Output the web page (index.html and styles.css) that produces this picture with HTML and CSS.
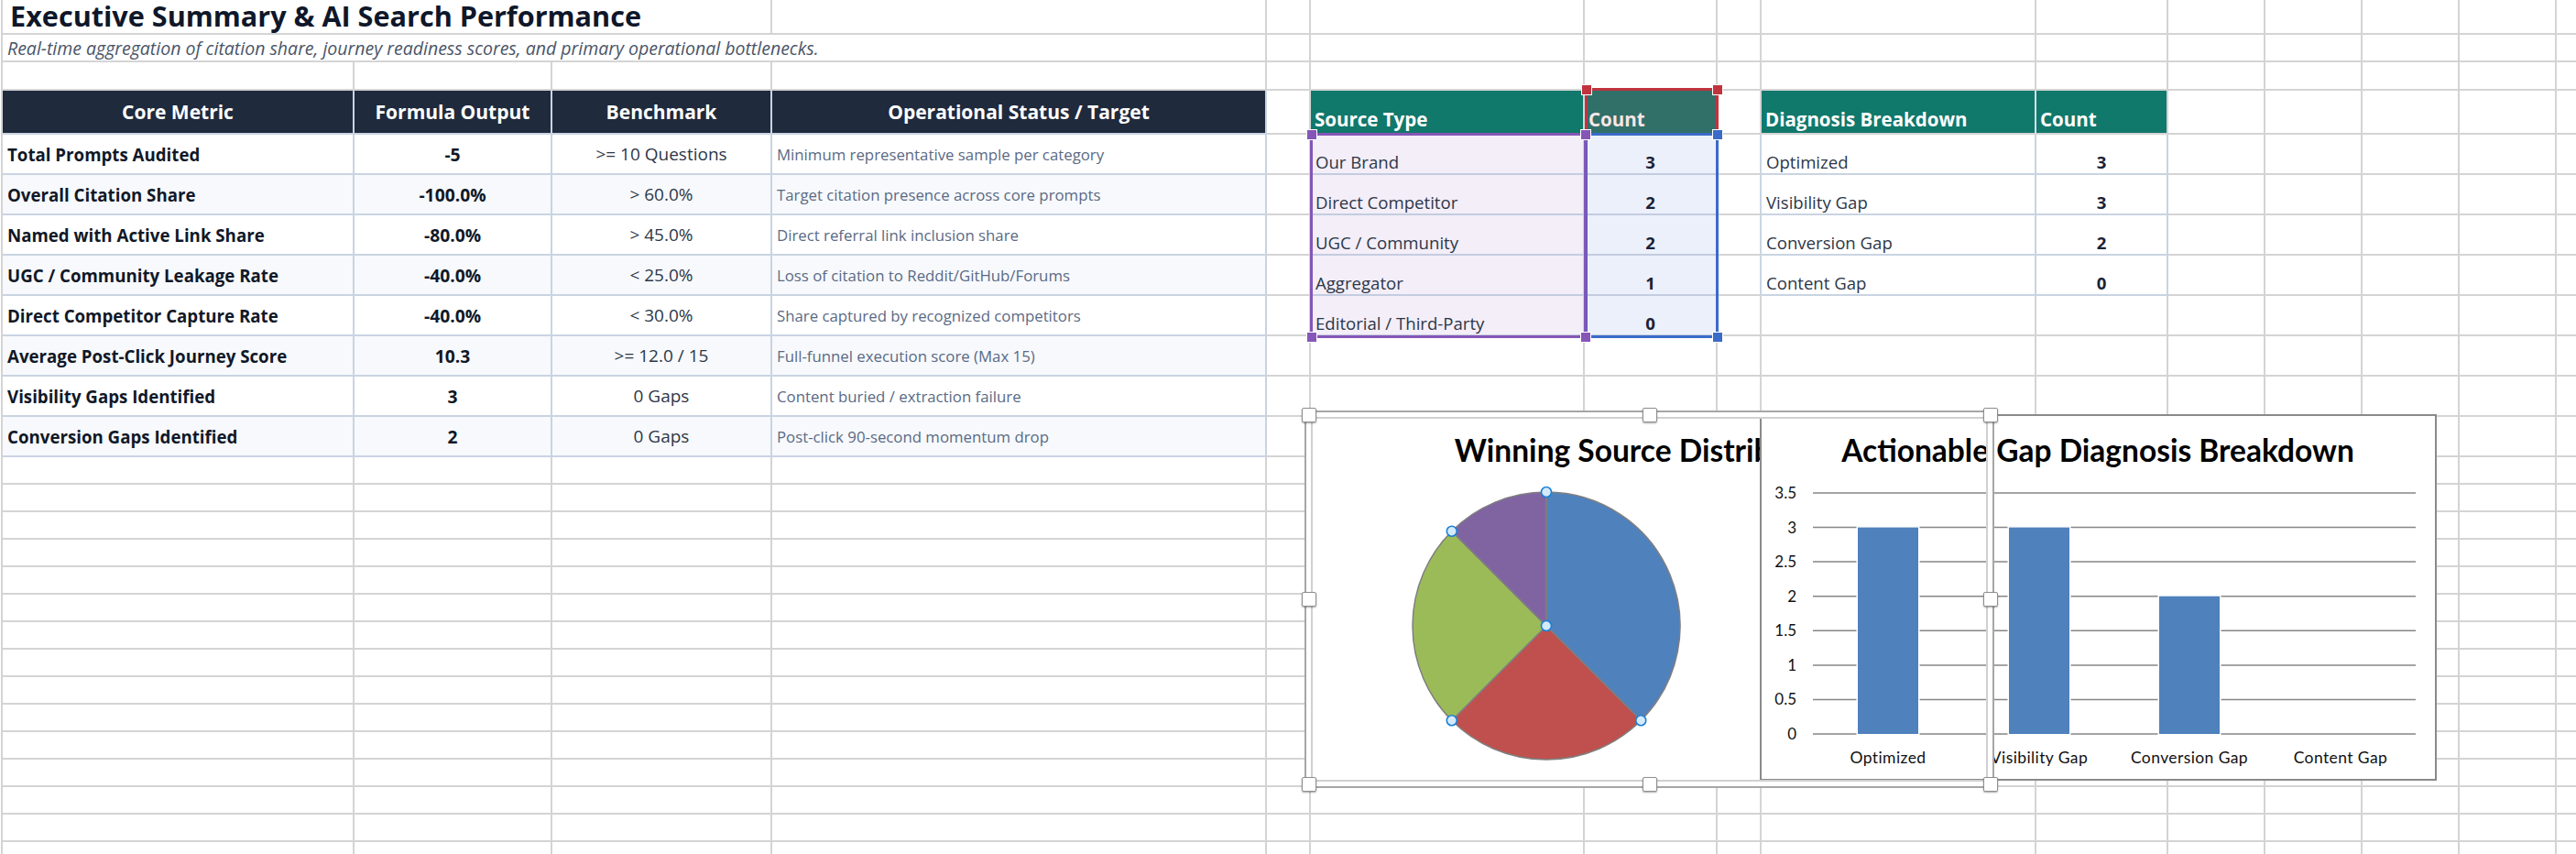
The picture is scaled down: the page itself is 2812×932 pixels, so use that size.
FILE: index.html
```html
<!DOCTYPE html>
<html lang="en">
<head>
<meta charset="utf-8">
<title>Executive Summary &amp; AI Search Performance</title>
<link rel="stylesheet" href="styles.css">
</head>
<body>
<div class="page">
  <div class="sheet">
    <div class="row r1">
      <div class="span3 title">Executive Summary &amp; AI Search Performance</div>
      <i></i><i></i><i></i><i></i><i></i><i></i><i></i><i></i><i></i><i></i><i></i><i></i>
    </div>
    <div class="row r2">
      <div class="span4 subtitle">Real-time aggregation of citation share, journey readiness scores, and primary operational bottlenecks.</div>
      <i></i><i></i><i></i><i></i><i></i><i></i><i></i><i></i><i></i><i></i><i></i>
    </div>
    <div class="row r3">
      <i></i><i></i><i></i><i></i><i></i><i></i><i></i><i></i><i></i><i></i><i></i><i></i><i></i><i></i><i></i>
    </div>
    <div class="row r4">
      <div class="th">Core Metric</div>
      <div class="th">Formula Output</div>
      <div class="th">Benchmark</div>
      <div class="th">Operational Status / Target</div>
      <i></i>
      <div class="tth">Source Type</div>
      <div class="tth picked">Count</div>
      <i></i>
      <div class="tth split">Diagnosis Breakdown</div>
      <div class="tth">Count</div>
      <i></i><i></i><i></i><i></i><i></i>
    </div>

    <div class="row rd">
      <div class="tb m">Total Prompts Audited</div>
      <div class="tb v">-5</div>
      <div class="tb b">&gt;= 10 Questions</div>
      <div class="tb d">Minimum representative sample per category</div>
      <i></i>
      <div class="sf">Our Brand</div>
      <div class="sg">3</div>
      <i class="edge"></i>
      <div class="dt dl">Optimized</div>
      <div class="dt dn">3</div>
      <i></i><i></i><i></i><i></i><i></i>
    </div>
    <div class="row rd zebra">
      <div class="tb m">Overall Citation Share</div>
      <div class="tb v">-100.0%</div>
      <div class="tb b">&gt; 60.0%</div>
      <div class="tb d">Target citation presence across core prompts</div>
      <i></i>
      <div class="sf">Direct Competitor</div>
      <div class="sg">2</div>
      <i class="edge"></i>
      <div class="dt dl">Visibility Gap</div>
      <div class="dt dn">3</div>
      <i></i><i></i><i></i><i></i><i></i>
    </div>
    <div class="row rd">
      <div class="tb m">Named with Active Link Share</div>
      <div class="tb v">-80.0%</div>
      <div class="tb b">&gt; 45.0%</div>
      <div class="tb d">Direct referral link inclusion share</div>
      <i></i>
      <div class="sf">UGC / Community</div>
      <div class="sg">2</div>
      <i class="edge"></i>
      <div class="dt dl">Conversion Gap</div>
      <div class="dt dn">2</div>
      <i></i><i></i><i></i><i></i><i></i>
    </div>
    <div class="row rd zebra">
      <div class="tb m">UGC / Community Leakage Rate</div>
      <div class="tb v">-40.0%</div>
      <div class="tb b">&lt; 25.0%</div>
      <div class="tb d">Loss of citation to Reddit/GitHub/Forums</div>
      <i></i>
      <div class="sf">Aggregator</div>
      <div class="sg">1</div>
      <i class="edge"></i>
      <div class="dt dl">Content Gap</div>
      <div class="dt dn">0</div>
      <i></i><i></i><i></i><i></i><i></i>
    </div>
    <div class="row rd">
      <div class="tb m">Direct Competitor Capture Rate</div>
      <div class="tb v">-40.0%</div>
      <div class="tb b">&lt; 30.0%</div>
      <div class="tb d">Share captured by recognized competitors</div>
      <i></i>
      <div class="sf">Editorial / Third-Party</div>
      <div class="sg">0</div>
      <i></i><i></i><i></i>
      <i></i><i></i><i></i><i></i><i></i>
    </div>
    <div class="row rd zebra">
      <div class="tb m">Average Post-Click Journey Score</div>
      <div class="tb v">10.3</div>
      <div class="tb b">&gt;= 12.0 / 15</div>
      <div class="tb d">Full-funnel execution score (Max 15)</div>
      <i></i><i></i><i></i><i></i><i></i><i></i><i></i><i></i><i></i><i></i><i></i>
    </div>
    <div class="row rd">
      <div class="tb m">Visibility Gaps Identified</div>
      <div class="tb v">3</div>
      <div class="tb b">0 Gaps</div>
      <div class="tb d">Content buried / extraction failure</div>
      <i></i><i></i><i></i><i></i><i></i><i></i><i></i><i></i><i></i><i></i><i></i>
    </div>
    <div class="row rd zebra">
      <div class="tb m">Conversion Gaps Identified</div>
      <div class="tb v">2</div>
      <div class="tb b">0 Gaps</div>
      <div class="tb d">Post-click 90-second momentum drop</div>
      <i></i><i></i><i></i><i></i><i></i><i></i><i></i><i></i><i></i><i></i><i></i>
    </div>

    <div class="row re"><i></i><i></i><i></i><i></i><i></i><i></i><i></i><i></i><i></i><i></i><i></i><i></i><i></i><i></i><i></i></div>
    <div class="row re"><i></i><i></i><i></i><i></i><i></i><i></i><i></i><i></i><i></i><i></i><i></i><i></i><i></i><i></i><i></i></div>
    <div class="row re"><i></i><i></i><i></i><i></i><i></i><i></i><i></i><i></i><i></i><i></i><i></i><i></i><i></i><i></i><i></i></div>
    <div class="row re"><i></i><i></i><i></i><i></i><i></i><i></i><i></i><i></i><i></i><i></i><i></i><i></i><i></i><i></i><i></i></div>
    <div class="row re"><i></i><i></i><i></i><i></i><i></i><i></i><i></i><i></i><i></i><i></i><i></i><i></i><i></i><i></i><i></i></div>
    <div class="row re"><i></i><i></i><i></i><i></i><i></i><i></i><i></i><i></i><i></i><i></i><i></i><i></i><i></i><i></i><i></i></div>
    <div class="row re"><i></i><i></i><i></i><i></i><i></i><i></i><i></i><i></i><i></i><i></i><i></i><i></i><i></i><i></i><i></i></div>
    <div class="row re"><i></i><i></i><i></i><i></i><i></i><i></i><i></i><i></i><i></i><i></i><i></i><i></i><i></i><i></i><i></i></div>
    <div class="row re"><i></i><i></i><i></i><i></i><i></i><i></i><i></i><i></i><i></i><i></i><i></i><i></i><i></i><i></i><i></i></div>
    <div class="row re"><i></i><i></i><i></i><i></i><i></i><i></i><i></i><i></i><i></i><i></i><i></i><i></i><i></i><i></i><i></i></div>
    <div class="row re"><i></i><i></i><i></i><i></i><i></i><i></i><i></i><i></i><i></i><i></i><i></i><i></i><i></i><i></i><i></i></div>
    <div class="row re"><i></i><i></i><i></i><i></i><i></i><i></i><i></i><i></i><i></i><i></i><i></i><i></i><i></i><i></i><i></i></div>
    <div class="row re"><i></i><i></i><i></i><i></i><i></i><i></i><i></i><i></i><i></i><i></i><i></i><i></i><i></i><i></i><i></i></div>
    <div class="row re"><i></i><i></i><i></i><i></i><i></i><i></i><i></i><i></i><i></i><i></i><i></i><i></i><i></i><i></i><i></i></div>
    <div class="row re"><i></i><i></i><i></i><i></i><i></i><i></i><i></i><i></i><i></i><i></i><i></i><i></i><i></i><i></i><i></i></div>
  </div>

  <!-- range selection overlays -->
  <div class="sel sel-red"><b class="k tl"></b><b class="k tr"></b></div>
  <div class="sel sel-blue"><b class="k tr"></b><b class="k br"></b></div>
  <div class="sel sel-purple"><b class="k tl"></b><b class="k tr"></b><b class="k bl"></b><b class="k br"></b></div>

  <!-- pie chart -->
  <div class="chart pie">
    <svg width="735" height="394" viewBox="0 0 735 394">
      <text class="ctitle" x="367" y="47" text-anchor="middle">Winning Source Distribution</text>
      <g stroke="#7f7f7f" stroke-width="1.5" stroke-linejoin="round">
        <path fill="#4f81bd" d="M255 226 L255 80 A146 146 0 0 1 358.24 329.24 Z"/>
        <path fill="#c0504d" d="M255 226 L358.24 329.24 A146 146 0 0 1 151.76 329.24 Z"/>
        <path fill="#9bbb59" d="M255 226 L151.76 329.24 A146 146 0 0 1 151.76 122.76 Z"/>
        <path fill="#8064a2" d="M255 226 L151.76 122.76 A146 146 0 0 1 255 80 Z"/>
      </g>
      <g fill="#d4eaf9" stroke="#1b7fd6" stroke-width="1.6">
        <circle cx="255" cy="80" r="5.5"/>
        <circle cx="151.76" cy="122.76" r="5.5"/>
        <circle cx="151.76" cy="329.24" r="5.5"/>
        <circle cx="358.24" cy="329.24" r="5.5"/>
        <circle cx="255" cy="226" r="5.5"/>
      </g>
    </svg>
  </div>

  <!-- bar chart -->
  <div class="chart bar">
    <svg width="735" height="396" viewBox="0 0 735 396">
      <text class="ctitle" x="367" y="50" text-anchor="middle">Actionable Gap Diagnosis Breakdown</text>
      <g stroke="#868686" stroke-width="1.5">
        <line x1="56" y1="84" x2="714" y2="84"/>
        <line x1="56" y1="121.6" x2="714" y2="121.6"/>
        <line x1="56" y1="159.1" x2="714" y2="159.1"/>
        <line x1="56" y1="196.7" x2="714" y2="196.7"/>
        <line x1="56" y1="234.3" x2="714" y2="234.3"/>
        <line x1="56" y1="271.9" x2="714" y2="271.9"/>
        <line x1="56" y1="309.4" x2="714" y2="309.4"/>
        <line x1="56" y1="347" x2="714" y2="347"/>
      </g>
      <g class="ylab" text-anchor="end">
        <text x="38" y="90">3.5</text>
        <text x="38" y="127.6">3</text>
        <text x="38" y="165.1">2.5</text>
        <text x="38" y="202.7">2</text>
        <text x="38" y="240.3">1.5</text>
        <text x="38" y="277.9">1</text>
        <text x="38" y="315.4">0.5</text>
        <text x="38" y="353">0</text>
      </g>
      <g fill="#4f81bd" stroke="#ffffff" stroke-width="3" paint-order="stroke">
        <rect x="105" y="121.6" width="66" height="225.4"/>
        <rect x="270" y="121.6" width="66" height="225.4"/>
        <rect x="434" y="196.7" width="66" height="150.3"/>
      </g>
      <g class="xlab" text-anchor="middle">
        <text x="138" y="379">Optimized</text>
        <text x="303" y="379">Visibility Gap</text>
        <text x="467" y="379">Conversion Gap</text>
        <text x="632" y="379">Content Gap</text>
      </g>
    </svg>
  </div>

  <!-- pie chart selection frame (drawn above everything) -->
  <div class="frame">
    <b class="fh ftl"></b><b class="fh ftc"></b><b class="fh ftr"></b>
    <b class="fh fml"></b><b class="fh fmr"></b>
    <b class="fh fbl"></b><b class="fh fbc"></b><b class="fh fbr"></b>
  </div>
</div>
</body>
</html>
```

FILE: styles.css
```css
* { box-sizing: border-box; margin: 0; padding: 0; }

html, body {
  width: 2812px;
  height: 932px;
  overflow: hidden;
  background: #ffffff;
}

body {
  font-family: "Open Sans", "Noto Sans", sans-serif;
  color: #111827;
}

.page {
  position: relative;
  width: 2812px;
  height: 932px;
  overflow: hidden;
}

/* ---------- spreadsheet grid ---------- */
.sheet {
  margin-left: 1px;
  border-left: 2px solid #d4d4d4;
  width: 2900px;
}

.row {
  display: grid;
  grid-template-columns: 384px 216px 240px 540px 48px 299px 145px 48px 300px 144px 106px 106px 106px 106px 106px;
}

.row > * {
  display: flex;
  min-width: 0;
  white-space: nowrap;
  border-right: 2px solid #d4d4d4;
  border-bottom: 2px solid #d4d4d4;
  font-style: normal;
}

.r1 { height: 38px; }
.r2 { height: 30px; }
.r3 { height: 31px; }
.r4 { height: 48px; }
.rd { height: 44px; }
.re { height: 30px; }

.span3 { grid-column: span 3; }
.span4 { grid-column: span 4; }

/* ---------- title rows ---------- */
.title {
  align-items: flex-start;
  padding-left: 8px;
  font-size: 30.6px;
  font-weight: 700;
  line-height: 34px;
  color: #0f172a;
}

.subtitle {
  align-items: flex-start;
  padding: 1px 0 0 5px;
  font-size: 19.5px;
  font-style: italic !important;
  line-height: 27px;
  color: #4a5568;
}

/* ---------- core metric table ---------- */
.th {
  background: #1f2a3d;
  color: #ffffff;
  font-size: 21px;
  font-weight: 700;
  justify-content: center;
  align-items: center;
  border-color: #c9d4e2 !important;
}

.tb {
  align-items: center;
  border-color: #c9d4e2 !important;
}

.zebra .tb { background: #f7f9fc; }

.m {
  padding-left: 5px;
  font-size: 18.7px;
  font-weight: 700;
  color: #111827;
}

.v {
  justify-content: center;
  font-size: 19.3px;
  font-weight: 700;
  color: #111827;
}

.b {
  justify-content: center;
  font-size: 19px;
  color: #2d3748;
}

.d {
  padding-left: 5px;
  font-size: 16.8px;
  color: #5a6a85;
}

/* ---------- right-hand tables ---------- */
.tth {
  background: #11786c;
  color: #ffffff;
  font-size: 20.5px;
  font-weight: 700;
  align-items: flex-end;
  padding: 0 0 1px 4px;
  line-height: 1.3;
}

.tth.picked {
  background: #316f69;
  color: #f8e6e6;
}

.tth.split { border-right-color: #d9e1ea; }

.sf, .sg, .dl, .dn {
  align-items: flex-end;
  font-size: 18.6px;
  line-height: 1.35;
}

.sf {
  background: #f3eef8;
  padding-left: 5px;
  color: #2d3748;
  border-bottom-color: #c4cce0 !important;
}

.sg {
  background: #ebf0fa;
  justify-content: center;
  font-weight: 700;
  color: #1a2236;
  border-bottom-color: #c4cce0 !important;
}

.dt { border-color: #c9d4e2 !important; }
.edge { border-right-color: #c9d4e2 !important; }

.dl {
  padding-left: 5px;
  color: #2d3748;
}

.dn {
  justify-content: center;
  font-weight: 700;
  color: #1a2236;
}

/* ---------- range selection overlays ---------- */
.sel {
  position: absolute;
  border: 3px solid;
  z-index: 5;
}

.sel-red    { left: 1730px; top: 96px;  width: 146px; height: 52px;  border-color: #c0343e; }
.sel-blue   { left: 1730px; top: 145px; width: 146px; height: 224px; border-color: #3a6bc8; }
.sel-purple { left: 1430px; top: 145px; width: 302px; height: 224px; border-color: #8556b7; }

.k {
  position: absolute;
  width: 12px;
  height: 12px;
  border: 1px solid #ffffff;
}

.sel-red .k    { background: #c0343e; }
.sel-blue .k   { background: #3a6bc8; }
.sel-purple .k { background: #8556b7; }

.k.tl { left: -7.5px; top: -7.5px; }
.k.tr { right: -7.5px; top: -7.5px; }
.k.bl { left: -7.5px; bottom: -7.5px; }
.k.br { right: -7.5px; bottom: -7.5px; }

/* ---------- charts ---------- */
.chart {
  position: absolute;
  background: #ffffff;
}

.chart svg { display: block; }

.pie {
  left: 1433px;
  top: 457px;
  width: 735px;
  height: 394px;
  z-index: 1;
}

.bar {
  left: 1921px;
  top: 452px;
  width: 739px;
  height: 400px;
  border: 2px solid #8a8a8a;
  z-index: 2;
}

.ctitle {
  font-family: Lato, "Liberation Sans", sans-serif;
  font-weight: 700;
  font-size: 33.5px;
  fill: #000000;
}

.ylab text {
  font-family: Lato, "Liberation Sans", sans-serif;
  font-size: 17px;
  fill: #111111;
}

.xlab text {
  font-family: Lato, "Liberation Sans", sans-serif;
  font-size: 17.5px;
  letter-spacing: 0.4px;
  fill: #111111;
}

/* pie chart selection frame */
.frame {
  position: absolute;
  left: 1424px;
  top: 448px;
  width: 753px;
  height: 412px;
  border: 2px solid #a6a6a6;
  box-shadow: inset 0 0 0 5px #ffffff, inset 0 0 0 7px #d0d0d0;
  z-index: 3;
}

.fh {
  position: absolute;
  width: 16px;
  height: 16px;
  background: #ffffff;
  border: 1px solid #8f8f8f;
  border-radius: 2px;
  box-shadow: 0 1px 2px rgba(0, 0, 0, 0.35);
}

.ftl { left: -5.5px; top: -5.5px; }
.ftc { left: calc(50% - 8px); top: -5.5px; }
.ftr { right: -5.5px; top: -5.5px; }
.fml { left: -5.5px; top: calc(50% - 8px); }
.fmr { right: -5.5px; top: calc(50% - 8px); }
.fbl { left: -5.5px; bottom: -5.5px; }
.fbc { left: calc(50% - 8px); bottom: -5.5px; }
.fbr { right: -5.5px; bottom: -5.5px; }
```
